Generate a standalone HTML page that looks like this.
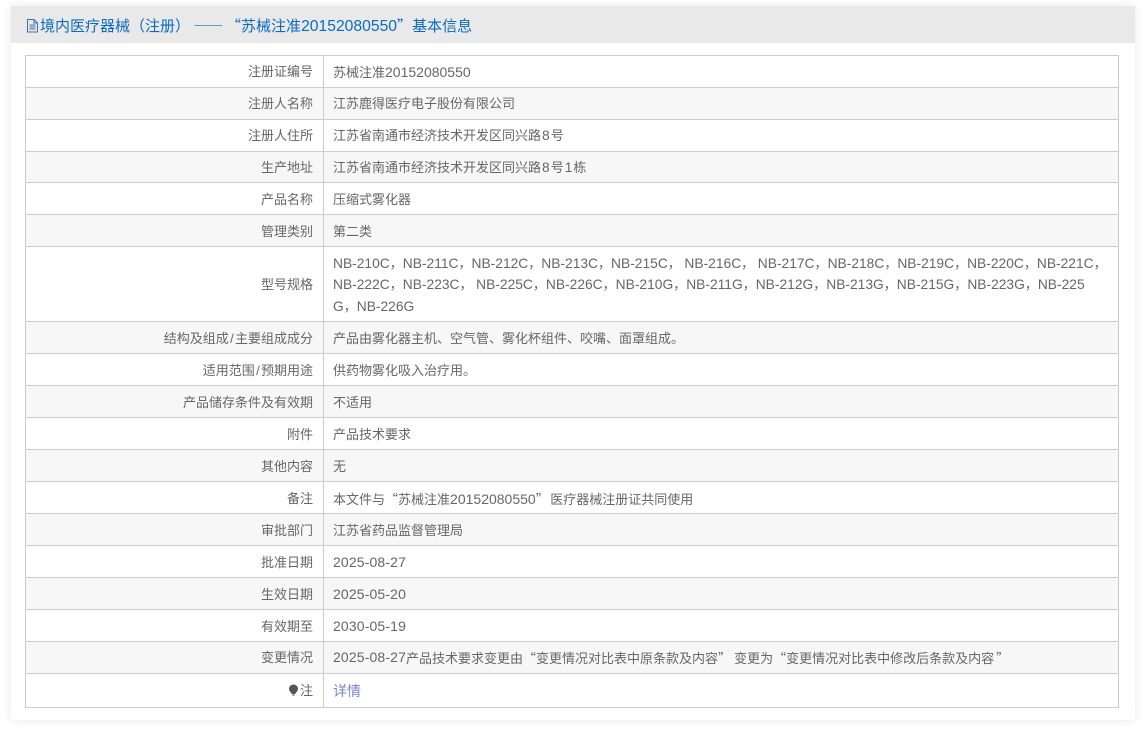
<!DOCTYPE html>
<html lang="zh-CN">
<head>
<meta charset="utf-8">
<title>基本信息</title>
<style>
html,body{margin:0;padding:0;background:#fff;}
body{width:1143px;height:731px;overflow:hidden;position:relative;font-family:"Liberation Sans","Noto Sans CJK SC",sans-serif;font-size:13px;color:#666;}
.panel{position:absolute;left:11px;top:6px;width:1124px;height:714px;background:#fff;box-shadow:0 0 10px rgba(0,0,0,.09);}
.head{position:absolute;left:11px;top:6px;width:1124px;height:37px;background:#e9e9e9;}
.title{position:absolute;left:40px;top:15px;line-height:21px;font-size:15px;color:#0a6bc0;white-space:nowrap;}
.title .t{font-size:15.7px;}
.title .dash{font-family:"Noto Sans CJK SC",sans-serif;letter-spacing:2.5px;margin-left:3.5px;}
.row{position:absolute;left:25px;width:1094px;box-sizing:border-box;border:1px solid #ccc;border-bottom:0;}
.row.alt{background:#f7f7f7;}
.l{position:absolute;left:0;top:0;bottom:0;width:297px;border-right:1px solid #ccc;box-sizing:content-box;}
.lt{position:absolute;right:10px;white-space:nowrap;line-height:20px;top:6px;}
.v{position:absolute;left:307px;white-space:nowrap;line-height:20px;top:6px;}
.low .lt,.low .v{top:7px;}
.v a{color:#7b84cf;text-decoration:none;font-size:14px;}
.multi{line-height:21.5px;font-size:13px;}
.up{position:relative;top:-1px;}
.m{font-size:13.8px;}
.n{font-size:14px;}
.dt{font-size:14px;letter-spacing:.14px;position:relative;top:-1px;}
.d{font-size:13.8px;margin:0 1px;}
.s{margin:0 1.3px;}
.q{font-family:"Noto Sans CJK SC",sans-serif;}
.bottom{position:absolute;left:25px;top:707px;width:1094px;height:1px;background:#ccc;}
svg{position:absolute;}
</style>
</head>
<body>
<div class="panel"></div>
<div class="head"></div>
<svg style="left:26px;top:19px" width="13" height="14" viewBox="0 0 13 14"><path d="M1.5 .5H8L11.5 4V13H1.5ZM8 .5V4H11.5M3.5 6H9.5M3.5 8H9.5M3.5 10H9.5" fill="none" stroke="#3f6fb5" stroke-width="1"/></svg>
<div class="title">境内医疗器械（注册）<span class="dash">——</span><span class="q">“</span>苏械注准<span class="t">20152080550</span><span class="q">”</span>基本信息</div>

<div class="row" style="top:55px;height:32px"><div class="l"><span class="lt">注册证编号</span></div><span class="v">苏械注准<span class="n">20152080550</span></span></div>
<div class="row alt" style="top:87px;height:32px"><div class="l"><span class="lt">注册人名称</span></div><span class="v">江苏鹿得医疗电子股份有限公司</span></div>
<div class="row" style="top:119px;height:32px"><div class="l"><span class="lt">注册人住所</span></div><span class="v">江苏省南通市经济技术开发区同兴路<span class="d">8</span>号</span></div>
<div class="row alt" style="top:151px;height:31px"><div class="l"><span class="lt">生产地址</span></div><span class="v">江苏省南通市经济技术开发区同兴路<span class="d">8</span>号<span class="d">1</span>栋</span></div>
<div class="row low" style="top:182px;height:32px"><div class="l"><span class="lt">产品名称</span></div><span class="v">压缩式雾化器</span></div>
<div class="row alt low" style="top:214px;height:32px"><div class="l"><span class="lt">管理类别</span></div><span class="v">第二类</span></div>
<div class="row" style="top:246px;height:75px"><div class="l"><span class="lt" style="top:28px">型号规格</span></div><span class="v multi" style="top:6px"><span class="m">NB-210C</span>，<span class="m">NB-211C</span>，<span class="m">NB-212C</span>，<span class="m">NB-213C</span>，<span class="m">NB-215C</span>， <span class="m">NB-216C</span>， <span class="m">NB-217C</span>，<span class="m">NB-218C</span>，<span class="m">NB-219C</span>，<span class="m">NB-220C</span>，<span class="m">NB-221C</span>，<br><span class="up"><span class="m">NB-222C</span>，<span class="m">NB-223C</span>， <span class="m">NB-225C</span>，<span class="m">NB-226C</span>，<span class="m">NB-210G</span>，<span class="m">NB-211G</span>，<span class="m">NB-212G</span>，<span class="m">NB-213G</span>，<span class="m">NB-215G</span>，<span class="m">NB-223G</span>，<span class="m">NB-225</span></span><br><span class="m">G</span>，<span class="m">NB-226G</span></span></div>
<div class="row alt low" style="top:321px;height:32px"><div class="l"><span class="lt">结构及组成<span class="s">/</span>主要组成成分</span></div><span class="v">产品由雾化器主机、空气管、雾化杯组件、咬嘴、面罩组成。</span></div>
<div class="row low" style="top:353px;height:32px"><div class="l"><span class="lt">适用范围<span class="s">/</span>预期用途</span></div><span class="v">供药物雾化吸入治疗用。</span></div>
<div class="row alt low" style="top:385px;height:32px"><div class="l"><span class="lt">产品储存条件及有效期</span></div><span class="v">不适用</span></div>
<div class="row low" style="top:417px;height:32px"><div class="l"><span class="lt">附件</span></div><span class="v">产品技术要求</span></div>
<div class="row alt low" style="top:449px;height:32px"><div class="l"><span class="lt">其他内容</span></div><span class="v">无</span></div>
<div class="row low" style="top:481px;height:32px"><div class="l"><span class="lt">备注</span></div><span class="v">本文件与<span class="q">“</span>苏械注准<span class="n">20152080550</span><span class="q" style="margin-right:1.5px">”</span>医疗器械注册证共同使用</span></div>
<div class="row alt low" style="top:513px;height:32px"><div class="l"><span class="lt">审批部门</span></div><span class="v">江苏省药品监督管理局</span></div>
<div class="row low" style="top:545px;height:32px"><div class="l"><span class="lt">批准日期</span></div><span class="v"><span class="dt">2025-08-27</span></span></div>
<div class="row alt low" style="top:577px;height:32px"><div class="l"><span class="lt">生效日期</span></div><span class="v"><span class="dt">2025-05-20</span></span></div>
<div class="row low" style="top:609px;height:32px"><div class="l"><span class="lt">有效期至</span></div><span class="v"><span class="dt">2030-05-19</span></span></div>
<div class="row alt" style="top:641px;height:32px"><div class="l"><span class="lt">变更情况</span></div><span class="v"><span class="dt">2025-08-27</span>产品技术要求变更由<span class="q">“</span>变更情况对比表中原条款及内容<span class="q" style="margin-right:3px">”</span>变更为<span class="q">“</span>变更情况对比表中修改后条款及内容<span class="q" style="margin-left:2px">”</span></span></div>
<div class="row low" style="top:673px;height:34px"><div class="l"><span class="lt">注</span></div><span class="v"><a>详情</a></span></div>
<div class="bottom"></div>
<svg style="left:288px;top:684px" width="11" height="12" viewBox="0 0 11 12"><path d="M5.5 .5C8 .5 10 2.4 10 4.9C10 7 8.2 8.4 6.8 10.4H4.2C2.8 8.4 1 7 1 4.9C1 2.4 3 .5 5.5 .5Z" fill="#555"/><path d="M4.4 11.4H6.6" stroke="#888" stroke-width="1"/></svg>
</body>
</html>
